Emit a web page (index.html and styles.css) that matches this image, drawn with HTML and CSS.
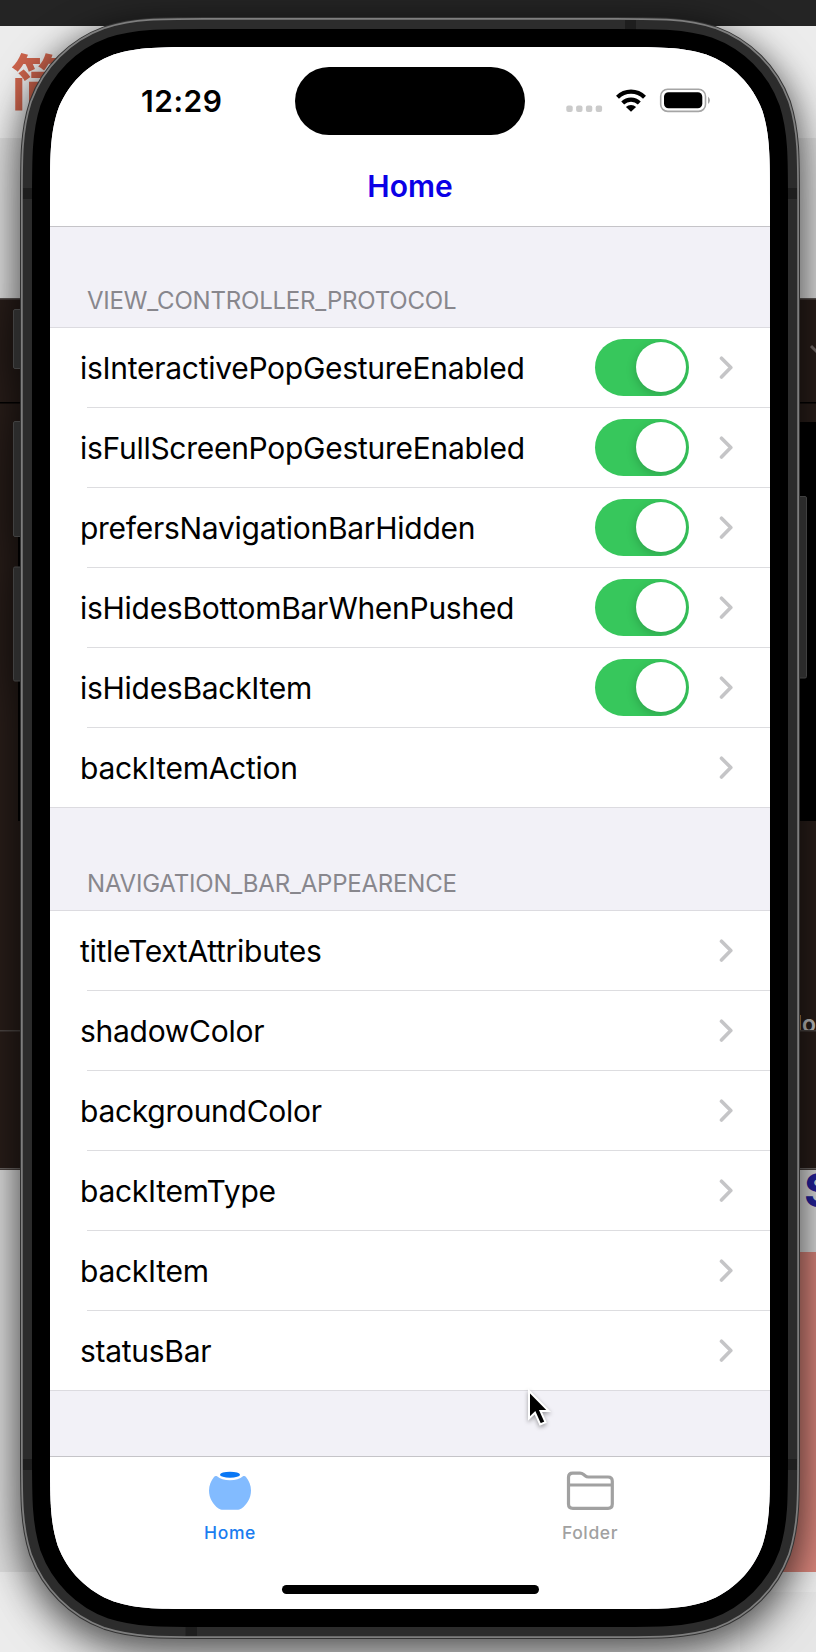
FILE: index.html
```html
<!DOCTYPE html>
<html lang="en">
<head>
<meta charset="utf-8">
<title>Home</title>
<link rel="stylesheet" href="styles.css">
</head>
<body>
<svg class="defs" width="0" height="0">
  <symbol id="chev" viewBox="0 0 14 24"><path d="M2.500 2.200 11.800 11.600 2.500 21" fill="none" stroke="#c5c5c7" stroke-width="3.600" stroke-linecap="round" stroke-linejoin="round"/></symbol>
</svg>
<div class="desktop">
  <svg class="backdrop" width="816" height="1652" viewBox="0 0 816 1652">
    <rect width="816" height="1652" fill="#ececec"/>
    <rect y="138" width="816" height="162" fill="#dedede"/>
    <rect width="816" height="26" fill="#242424"/>
    <rect y="298" width="816" height="872" fill="#281d19"/>
    <rect y="298" width="816" height="1.5" fill="#5c5654"/>
    <rect y="402" width="816" height="1.5" fill="#000"/>
    <rect x="790" y="422" width="26" height="399" fill="#000"/>
    <rect x="18" y="530" width="8" height="291" fill="#000"/>
    <rect y="1030" width="816" height="1.5" fill="#4b4543"/>
    <rect y="1168" width="816" height="1.5" fill="#6b6664"/>
    <rect y="1170" width="816" height="402" fill="#dcdcdc"/>
    <rect x="740" y="1252" width="76" height="320" fill="#d9857b"/>
    <rect x="740" y="1592" width="76" height="60" fill="#e6e6e6"/>
    <path d="m811 346 8 8" stroke="#716865" stroke-width="3"/>
    <text x="10" y="105" class="bg-cjk">简</text>
    <svg x="796" y="1000" width="20" height="30" viewBox="796 1000 20 30"><text x="796" y="1032" class="bg-small">lo</text></svg>
    <text x="804" y="1207" class="bg-s">S</text>
  </svg>
  <svg class="phone" width="816" height="1652" viewBox="0 0 816 1652">
    <defs>
      <path id="body" transform="translate(50 47)" d="M154.4 0H565.6c44.5 0 66.7 0 90.6 7.6c26.1 9.5 46.7 30.1 56.2 56.2c7.6 23.9 7.6 46.1 7.6 90.6V1407.6c0 44.5 0 66.7-7.6 90.6c-9.5 26.1-30.1 46.7-56.2 56.2c-23.9 7.6-46.1 7.6-90.6 7.6H154.4c-44.5 0-66.7 0-90.6-7.6c-26.1-9.5-46.7-30.1-56.2-56.2c-7.6-23.9-7.6-46.1-7.6-90.6V154.4c0-44.5 0-66.7 7.6-90.6c9.5-26.1 30.1-46.7 56.2-56.2c23.9-7.6 46.1-7.6 90.6-7.6Z"/>
    </defs>
    <g fill="#2b2b2b" stroke="#404040" stroke-width="1">
      <rect x="13.5" y="309.500" width="14" height="59" rx="1.500"/>
      <rect x="13.5" y="421.500" width="14" height="115" rx="1.500"/>
      <rect x="13.5" y="567" width="14" height="114" rx="1.500"/>
      <rect x="790" y="496.500" width="16.500" height="181.500" rx="1.500"/>
    </g>
    <use href="#body" stroke="#333" stroke-width="60"/>
    <use href="#body" stroke="#7e7e7e" stroke-width="58"/>
    <use href="#body" stroke="#2c2c2c" stroke-width="54.500"/>
    <g fill="#1e1e1e">
      <rect x="625" y="20" width="11" height="10"/><rect x="185.500" y="1626" width="11.500" height="10"/>
      <rect x="23" y="188" width="10" height="11"/><rect x="787" y="188" width="10" height="11"/>
      <rect x="23" y="1459" width="10" height="11"/><rect x="787" y="1459" width="10" height="11"/>
    </g>
    <use href="#body" stroke="#000" stroke-width="36"/>
  </svg>
  <main class="screen">
    <header class="navbar">
      <div class="status">
        <div class="time">12:29</div>
        <div class="island"></div>
        <svg class="indicators" width="150" height="30" viewBox="562 85 150 30">
          <g fill="#cbcbcb"><rect x="566.300" y="105.500" width="6.400" height="6.400" rx="2"/><rect x="576.100" y="105.500" width="6.400" height="6.400" rx="2"/><rect x="585.900" y="105.500" width="6.400" height="6.400" rx="2"/><rect x="595.700" y="105.500" width="6.400" height="6.400" rx="2"/></g>
          <g fill="none" stroke="#000" stroke-width="4.200"><path d="M617.500 97.200a19.300 19.300 0 0 1 27 0"/><path d="M622.700 103a12 12 0 0 1 16.600 0"/></g>
          <path d="M631 111.800l-5.100-4.900a7.500 7.500 0 0 1 10.200 0z"/>
          <rect x="660.700" y="89.200" width="44.800" height="22.200" rx="7" fill="none" stroke="#a5a5a5" stroke-width="1.600"/>
          <rect x="664" y="92.300" width="38.300" height="16" rx="4.500"/>
          <path d="M708 96.500q4 3.800 0 7.600z" fill="#a5a5a5"/>
        </svg>
      </div>
      <h1 class="title">Home</h1>
    </header>
    <section class="group">
      <h2 class="heading">VIEW_CONTROLLER_PROTOCOL</h2>
      <ul class="rows">
        <li class="row"><span class="label">isInteractivePopGestureEnabled</span><span class="toggle"></span><svg class="chev"><use href="#chev"/></svg></li>
        <li class="row"><span class="label">isFullScreenPopGestureEnabled</span><span class="toggle"></span><svg class="chev"><use href="#chev"/></svg></li>
        <li class="row"><span class="label">prefersNavigationBarHidden</span><span class="toggle"></span><svg class="chev"><use href="#chev"/></svg></li>
        <li class="row"><span class="label">isHidesBottomBarWhenPushed</span><span class="toggle"></span><svg class="chev"><use href="#chev"/></svg></li>
        <li class="row"><span class="label">isHidesBackItem</span><span class="toggle"></span><svg class="chev"><use href="#chev"/></svg></li>
        <li class="row"><span class="label">backItemAction</span><svg class="chev"><use href="#chev"/></svg></li>
      </ul>
    </section>
    <section class="group second">
      <h2 class="heading">NAVIGATION_BAR_APPEARENCE</h2>
      <ul class="rows">
        <li class="row"><span class="label">titleTextAttributes</span><svg class="chev"><use href="#chev"/></svg></li>
        <li class="row"><span class="label">shadowColor</span><svg class="chev"><use href="#chev"/></svg></li>
        <li class="row"><span class="label">backgroundColor</span><svg class="chev"><use href="#chev"/></svg></li>
        <li class="row"><span class="label">backItemType</span><svg class="chev"><use href="#chev"/></svg></li>
        <li class="row"><span class="label">backItem</span><svg class="chev"><use href="#chev"/></svg></li>
        <li class="row"><span class="label">statusBar</span><svg class="chev"><use href="#chev"/></svg></li>
      </ul>
    </section>
    <nav class="tabbar">
      <div class="tabs">
        <div class="tab active">
          <svg width="50" height="42" viewBox="205 1470 50 42">
            <ellipse cx="230" cy="1474.700" rx="10" ry="3" fill="#0a78f5"/>
            <path d="M217 1476.200c3 2.600 7.500 4.100 13 4.100s10-1.500 13-4.100c1.200-.6 2.200-.2 3 .8 3 3.700 5 8.300 5 13.500 0 7.500-4 14-9.500 18-1.500 1-2.700 1.300-4.500 1.300h-14c-1.800 0-3-.3-4.500-1.300-5.500-4-9.500-10.500-9.500-18 0-5.200 2-9.800 5-13.500.8-1 1.800-1.400 3-.8z" fill="#82bbff"/>
          </svg>
          <span>Home</span>
        </div>
        <div class="tab">
          <svg width="50" height="42" viewBox="565 1470 50 42">
            <path d="M568.500 1504v-26.500q0-4.300 4.300-4.300h7.200q2 0 3.600 1.300l1.500 1.200q1.500 1.300 3.500 1.300h19.400q4.300 0 4.300 4.300V1504q0 4.300-4.300 4.300h-35.200q-4.300 0-4.300-4.300zM568.500 1485h43.800" fill="none" stroke="#a1a1a1" stroke-width="3.200"/>
          </svg>
          <span>Folder</span>
        </div>
      </div>
      <div class="home-bar"></div>
    </nav>
  </main>
  <svg class="cursor" width="30" height="42" viewBox="0 0 30 42"><path d="M4 3v27.500l6-5.700 5.200 11.700 5.300-2.300-5-11.200h8.200z" fill="#000" stroke="#fff" stroke-width="2"/></svg>
</div>
</body>
</html>
```
FILE: styles.css
```css
* { box-sizing: border-box; }
body { margin: 0; font-family: Inter, "Liberation Sans", sans-serif; color: #000; }
h1, h2, ul { margin: 0; padding: 0; font-weight: 400; list-style: none; }
.defs { position: absolute; }
.desktop { position: relative; width: 816px; height: 1652px; padding: 47px 46px 43px 50px; overflow: hidden; }
.backdrop, .phone { position: absolute; left: 0; top: 0; display: block; }
.phone { overflow: visible; filter: drop-shadow(0 14px 20px rgba(0, 0, 0, .5)) drop-shadow(0 4px 14px rgba(0, 0, 0, .3)); }
.bg-cjk { font: 700 60px "Noto Sans CJK SC", sans-serif; fill: #cb634c; }
.bg-small { font: 600 23px Inter, sans-serif; fill: #c4c4c4; }
.bg-s { font: 700 47px Inter, sans-serif; fill: #24219c; }

.screen {
  position: relative;
  display: flex;
  flex-direction: column;
  width: 720px;
  height: 1562px;
  background: #f2f1f7;
  clip-path: path("M154.4 0H565.6c44.5 0 66.7 0 90.6 7.6c26.1 9.5 46.7 30.1 56.2 56.2c7.6 23.9 7.6 46.1 7.6 90.6V1407.6c0 44.5 0 66.7-7.6 90.6c-9.5 26.1-30.1 46.7-56.2 56.2c-23.9 7.6-46.1 7.6-90.6 7.6H154.4c-44.5 0-66.7 0-90.6-7.6c-26.1-9.5-46.7-30.1-56.2-56.2c-7.6-23.9-7.6-46.1-7.6-90.6V154.4c0-44.5 0-66.7 7.6-90.6c9.5-26.1 30.1-46.7 56.2-56.2c23.9-7.6 46.1-7.6 90.6-7.6Z");
}

.navbar { height: 180px; padding-top: 20px; background: #fff; border-bottom: 1px solid #c5c4c8; }
.status { display: grid; grid-template-columns: 245px 230px 1fr; height: 68px; }
.time { padding: 16px 0 0 91px; font-size: 30px; font-weight: 600; line-height: 36px; letter-spacing: .5px; }
.island { border-radius: 34px; background: #000; }
.indicators { margin: 18px 0 0 37px; }
.title { margin-top: 33px; text-align: center; color: #0b00e6; font-size: 30px; font-weight: 600; line-height: 36px; letter-spacing: 0; }

.heading { height: 100px; padding: 59px 0 0 37px; color: #88878d; font-size: 24px; line-height: 30px; letter-spacing: -.2px; }
.second .heading { height: 102px; padding-top: 61px; }
.rows { border-top: 1px solid #dcdbe0; border-bottom: 1px solid #dcdbe0; background: #fff; }
.row { position: relative; display: flex; align-items: center; height: 80px; padding: 0 37px 0 30px; }
.row:last-child { height: 79px; }
.row + .row::before { content: ""; position: absolute; left: 37px; right: 0; top: -1px; height: 1px; background: #dddde0; }
.label { flex: 1; font-size: 30px; line-height: 40px; letter-spacing: -.28px; }
.toggle { display: flex; justify-content: flex-end; width: 94px; height: 57px; margin: -1px 30px 0 0; padding: 3px 3.500px; border-radius: 29px; background: #37c75c; }
.toggle::after { content: ""; width: 50px; height: 50px; border-radius: 50%; background: #fff; box-shadow: -1px 3px 10px rgba(0, 0, 0, .17); }
.toggle { overflow: hidden; }
.chev { width: 14px; height: 24px; }

.tabbar { height: 153px; margin-top: auto; background: #fff; border-top: 1px solid #c5c4c8; }
.tabs { display: grid; grid-template-columns: 1fr 1fr; height: 128px; }
.tab { display: flex; flex-direction: column; align-items: center; padding-top: 13px; color: #a1a1a1; font-size: 17.500px; font-weight: 500; line-height: 22px; letter-spacing: .6px; }
.tab span { margin-top: 10px; }
.active { color: #1a7df0; }
.home-bar { width: 257px; height: 9px; margin: 0 auto; border-radius: 5px; background: #000; }

.cursor { position: absolute; left: 525px; top: 1388px; filter: drop-shadow(0 2px 2px rgba(0, 0, 0, .35)); }
```
